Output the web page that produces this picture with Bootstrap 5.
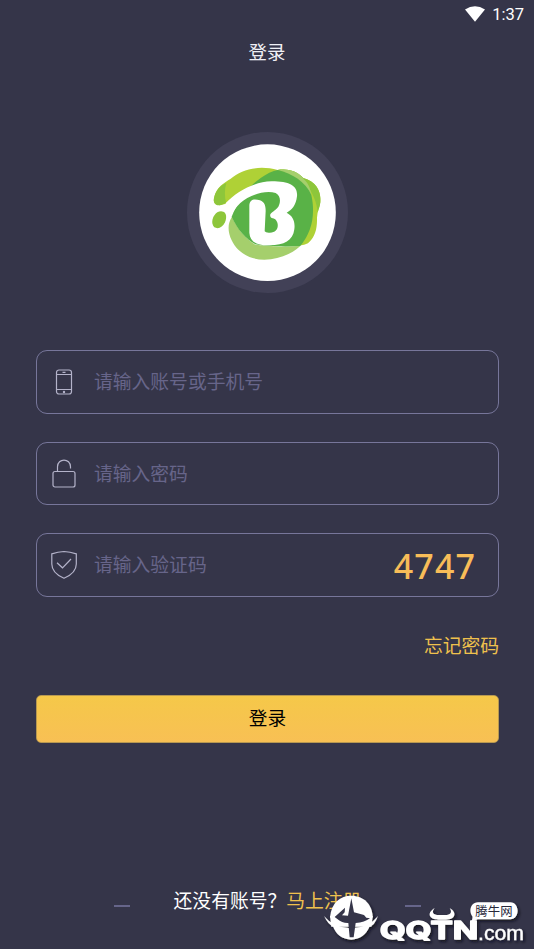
<!DOCTYPE html>
<html lang="zh-CN">
<head>
<meta charset="utf-8">
<meta name="viewport" content="width=device-width, initial-scale=1">
<title>登录</title>
<link href="https://cdn.jsdelivr.net/npm/bootstrap@5.3.0/dist/css/bootstrap.min.css" rel="stylesheet">
<style>
body{background:#353549;font-family:"Noto Sans CJK SC","Noto Sans",sans-serif;font-size:18.8px;line-height:28px;color:#fff}
.screen{height:949px;overflow:hidden}
.status{height:28px;padding:1px 10px 0 0;font:400 16.5px/28px Roboto,sans-serif;gap:7px}
.status svg{margin-top:-2px}
.title-bar{height:48px;font-size:18.4px;color:#f0f0f6;padding-bottom:3px}
.avatar{width:161px;height:161px;margin-top:56.4px;background:#424157}
.login-form{margin:57px 35px 0 36px}
.field{height:63.500px;margin-bottom:27.9px;border:1.3px solid #77769a;border-radius:11px;padding:0 22px 0 13px}
.field svg{width:28px;height:32px;flex:none;fill:none;stroke:#b4b3ca;stroke-width:1.2}
.field .form-control{color:#fff;font-size:18.8px;font-weight:400;line-height:28px;margin-left:16px;min-width:0;padding-bottom:2px!important}
.field .form-control::placeholder{color:#67658a;opacity:1}
.captcha{font:500 34px/40px "Noto Sans",sans-serif;color:#f8bd58;letter-spacing:1.1px;padding-top:2px}
.gold{color:#efc14d}
.forgot{margin-top:34px}
.submit{height:48px;margin-top:36px;border:1px solid #b79851;border-radius:5px;background:linear-gradient(#f5c849,#f8c054);font-size:18.7px;line-height:28px;padding:0 0 4px}
.signup{margin-top:143.500px;padding:0 113px 0 114px}
.dash{width:16px;height:2px;background:#66658a;margin-top:12px}
.watermark{left:310px;top:880px;width:224px;height:69px}
</style>
<script src="https://cdn.jsdelivr.net/npm/bootstrap@5.3.0/dist/js/bootstrap.bundle.min.js"></script>
</head>
<body>
<main class="screen position-relative">
  <div class="status d-flex justify-content-end align-items-center">
    <svg width="20" height="16" viewBox="0 0 20 16"><path d="M0 3.5Q10-2.8 20 3.5L10 15.7Z" fill="#fff"/></svg>
    <span>1:37</span>
  </div>
  <header class="title-bar d-flex justify-content-center align-items-center">登录</header>
  <div class="avatar rounded-circle mx-auto">
    <svg class="d-block" width="161" height="161" viewBox="30 28 483 483">
      <circle cx="271.500" cy="270" r="205" fill="#fff"/>
      <path d="M112 222C119 194 140 181 160 169C196 137 250 128 302 142C332 137 358 145 379 166C416 176 433 204 430 239C428 254 421 267 420 285C421 318 414 342 396 359C388 367 375 367 366 369L260 250L155 239C142 247 126 250 116 245C108 239 110 230 112 222Z" fill="#afd136"/>
      <path d="M112 222C117 203 130 188 148 181C142 201 143 222 147 240C132 248 121 251 115 244C109 237 110 229 112 222Z" fill="#8dc63b"/>
      <path d="M302 142C332 137 358 145 379 166C416 176 433 204 430 239C429 250 425 259 422 269C420 241 408 211 389 187C367 162 337 148 302 142Z" fill="#8dc63b"/>
      <path d="M302 142C338 136 367 149 380 169C397 184 402 204 403 224C384 183 343 154 302 142Z" fill="#a5cf6c"/>
      <path d="M165 282C151 303 152 328 164 353C181 389 217 411 262 411C306 410 344 394 370 370C325 373 280 371 235 366C202 345 180 316 165 282Z" fill="#a5cf6c"/>
      <path d="M164 282C181 242 210 185 277 150Q291 144 302 142C345 153 386 177 403 217C416 277 404 329 370 370C323 373 269 371 235 365C204 346 181 320 164 282Z" fill="#59b247"/>
      <path d="M139 270L147 240C178 210 224 178 284 176C340 176 363 191 360 221C357 248 344 263 329 270C348 280 355 296 352 320C348 354 321 368 278 368C237 369 219 356 217 330L217 248C218 230 231 227 249 233C263 238 266 250 266 265L263 326Q266 331 279 330C296 329 304 319 302 304C300 292 293 287 284 286Q278 283 280 275C282 270 294 264 304 252C311 239 312 219 296 211C262 201 214 219 190 241C177 253 166 270 158 287L144 300Z" fill="#fff"/>
      <path d="M139 267C148 271 150 283 144 299C137 315 123 320 112 314C99 302 108 277 121 269Q130 264 139 267Z" fill="#8dc63b"/>
    </svg>
  </div>
  <form class="login-form">
    <div class="field d-flex align-items-center">
      <svg viewBox="0 0 28 32"><rect x="6.500" y="4" width="15" height="24" rx="2.500"/><path d="M6.500 8.500h15M6.500 23.500h15M12.500 6.300h3"/><circle cx="14" cy="26" r=".6"/></svg>
      <input class="form-control border-0 bg-transparent shadow-none p-0" placeholder="请输入账号或手机号" aria-label="账号">
    </div>
    <div class="field d-flex align-items-center">
      <svg viewBox="0 0 28 32"><rect x="3" y="13.500" width="22" height="15.500" rx="2"/><path d="M7.500 13.500V8.800C7.500-.2 20.500-.2 20.500 8.800V10.500"/></svg>
      <input type="password" class="form-control border-0 bg-transparent shadow-none p-0" placeholder="请输入密码" aria-label="密码">
    </div>
    <div class="field d-flex align-items-center">
      <svg viewBox="0 0 28 32"><path d="M14 2.500Q20 3 26.300 4.800V15C26.300 22.500 20.500 26.500 14 29.300C7.500 26.500 1.800 22.500 1.800 15V4.800Q8 3 14 2.500ZM7 13.800L12.500 18.800L21 10"/></svg>
      <input class="form-control border-0 bg-transparent shadow-none p-0" placeholder="请输入验证码" aria-label="验证码">
      <span class="captcha">4747</span>
    </div>
    <div class="forgot text-end gold">忘记密码</div>
    <button type="button" class="submit btn w-100 text-black">登录</button>
  </form>
  <footer class="signup d-flex justify-content-between align-items-center">
    <span class="dash"></span>
    <span>还没有账号？<span class="gold">马上注册</span></span>
    <span class="dash"></span>
  </footer>
  <svg class="watermark position-absolute" viewBox="0 0 672 207">
    <defs><filter id="shade" x="-10%" y="-10%" width="120%" height="130%"><feDropShadow dx="5" dy="6" stdDeviation="4" flood-color="#0b0b17" flood-opacity=".85"/></filter></defs>
    <g filter="url(#shade)" fill="#fff">
      <path d="M60 112C64 67 91 47 124 47C161 47 187 73 188 112Q160 138 124 138Q87 137 60 112Z"/>
      <path d="M42 108Q70 143 124 145Q177 143 204 108Q193 138 179 139Q163 178 124 179Q83 178 69 139Q54 133 42 108Z"/>
      <path d="M60 108H188L184 140H64Z"/>
      <path d="M124 55L132 97L162 105L169 113L180 115Q164 127 137 129L131 172H119L115 129Q97 130 82 117L74 111L105 83L104 97L96 106L114 107Z" fill="#353549"/>
      <path d="M374 84C346 102 361 119 386 119H408C435 119 443 98 419 84C428 98 421 105 405 105H387C370 105 363 98 374 84Z"/>
      <text x="209" y="178" font-family="Inter,sans-serif" font-weight="700" font-size="72" textLength="296" lengthAdjust="spacingAndGlyphs" stroke="#fff" stroke-width="4" stroke-linejoin="round">QQTN</text>
      <text x="504" y="179" font-family="'Liberation Sans',Arial,sans-serif" font-size="62" textLength="138" lengthAdjust="spacingAndGlyphs" stroke="#fff" stroke-width="1">.com</text>
      <path d="M504 67H601C630 67 630 118 601 118H503L481 129Q489 120 487 109C475 94 482 67 504 67Z"/>
    </g>
    <text x="496" y="107" font-family="Noto Sans CJK SC,sans-serif" font-size="37" fill="#28283a" textLength="112">腾牛网</text>
  </svg>
</main>
</body>
</html>
